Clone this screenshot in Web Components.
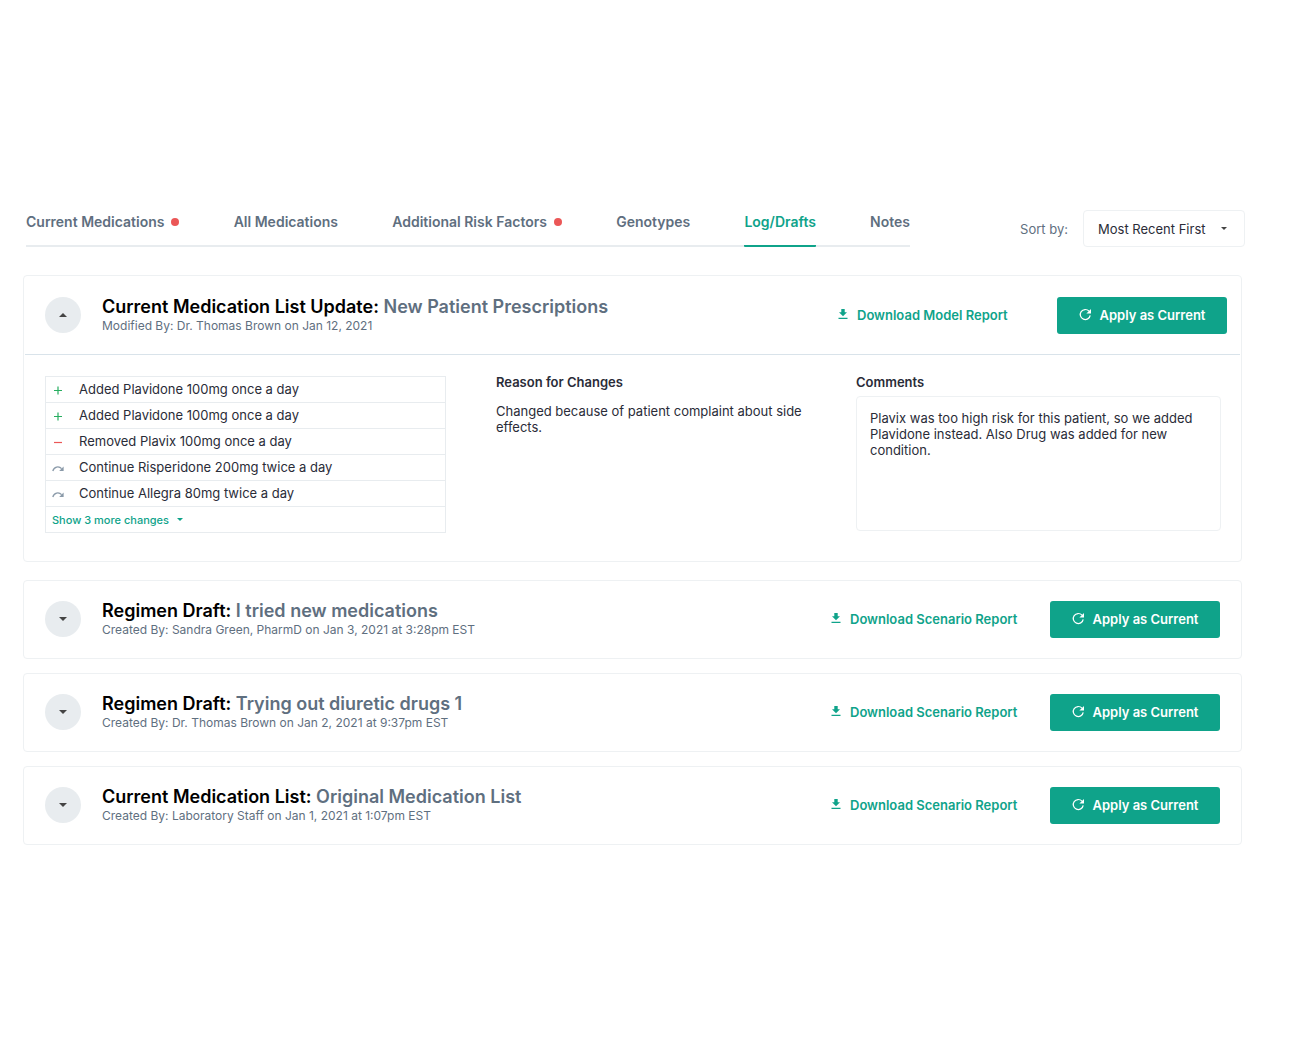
<!DOCTYPE html>
<html lang="en">
<head>
<meta charset="utf-8">
<title>Log/Drafts</title>
<style>
	:root {
		--teal: #0fa38a;
		--slate: #5f6f7f;
		--ink: #2a2c38;
		--line: #e8ecef;
		--hair: #eef1f3;
	}
	body {
		margin: 0;
		background: #fff;
		color: var(--ink);
		font: 13px/16px Inter, "Liberation Sans", sans-serif;
	}
</style>
</head>
<body>
<log-page>
	<nav-tabs slot="tabs">
		<nav-tab alert>Current Medications</nav-tab>
		<nav-tab>All Medications</nav-tab>
		<nav-tab alert>Additional Risk Factors</nav-tab>
		<nav-tab>Genotypes</nav-tab>
		<nav-tab active>Log/Drafts</nav-tab>
		<nav-tab>Notes</nav-tab>
	</nav-tabs>
	<sort-select slot="sort"></sort-select>

	<log-card open report="Download Model Report">
		<span slot="kind">Current Medication List Update:</span>
		<span slot="name">New Patient Prescriptions</span>
		<span slot="byline">Modified By: Dr. Thomas Brown on Jan 12, 2021</span>
		<change-list slot="changes">
			<change-item type="added">Added Plavidone 100mg once a day</change-item>
			<change-item type="added">Added Plavidone 100mg once a day</change-item>
			<change-item type="removed">Removed Plavix 100mg once a day</change-item>
			<change-item type="continued">Continue Risperidone 200mg twice a day</change-item>
			<change-item type="continued">Continue Allegra 80mg twice a day</change-item>
		</change-list>
		<span slot="reason">Changed because of patient complaint about side effects.</span>
		<comment-box slot="comments" text="Plavix was too high risk for this patient, so we added Plavidone instead. Also Drug was added for new condition."></comment-box>
	</log-card>
	<log-card report="Download Scenario Report">
		<span slot="kind">Regimen Draft:</span>
		<span slot="name">I tried new medications</span>
		<span slot="byline">Created By: Sandra Green, PharmD on Jan 3, 2021 at 3:28pm EST</span>
	</log-card>
	<log-card report="Download Scenario Report">
		<span slot="kind">Regimen Draft:</span>
		<span slot="name">Trying out diuretic drugs 1</span>
		<span slot="byline">Created By: Dr. Thomas Brown on Jan 2, 2021 at 9:37pm EST</span>
	</log-card>
	<log-card report="Download Scenario Report">
		<span slot="kind">Current Medication List:</span>
		<span slot="name">Original Medication List</span>
		<span slot="byline">Created By: Laboratory Staff on Jan 1, 2021 at 1:07pm EST</span>
	</log-card>
</log-page>

<script>
const CHANGE_ICONS = {
	added: `<path d="M6 1.500v8M2 5.500h8" stroke="#27ae60" stroke-width="1.2"/>`,
	removed: `<path d="M2 5.500h8" stroke="#eb5757" stroke-width="1.2"/>`,
	continued: `<path d="M.8 8C2 3.600 6.800 2.600 9.600 5.600" stroke="#8a9aa9" stroke-width="1.300"/><path d="M11.600 3.600v4.400H7.200z" fill="#8a9aa9"/>`
};

class LogPage
extends HTMLElement
{
	constructor ()
	{
		super();
		this.attachShadow({mode:"open"});
		this.shadowRoot.innerHTML = `
			<style>
				:host {
					display: block;
					padding: 210px 53px 40px 23px;
				}
				header {
					display: flex;
					justify-content: space-between;
					gap: 110px;
					margin-bottom: 28px;
					padding-left: 3px;
				}
				slot[name="tabs"]::slotted(*) {
					flex: 1;
				}
				main {
					display: flex;
					flex-direction: column;
					gap: 14px;
					padding-right: 3px;
				}
			</style>
			<header>
				<slot name="tabs"></slot>
				<slot name="sort"></slot>
			</header>
			<main><slot></slot></main>
		`;
	}
}

class NavTabs
extends HTMLElement
{
	constructor ()
	{
		super();
		this.attachShadow({mode:"open"});
		this.shadowRoot.innerHTML = `
			<style>
				:host {
					display: block;
				}
				nav {
					display: flex;
					justify-content: space-between;
					box-sizing: border-box;
					height: 37px;
					border-bottom: 2px solid var(--line);
				}
			</style>
			<nav><slot></slot></nav>
		`;
	}
}

class NavTab
extends HTMLElement
{
	constructor ()
	{
		super();
		this.attachShadow({mode:"open"});
		this.shadowRoot.innerHTML = `
			<style>
				:host {
					display: flex;
					margin-bottom: -2px;
				}
				button {
					display: flex;
					align-items: flex-start;
					gap: 7px;
					padding: 0;
					border: 0;
					border-bottom: 2px solid transparent;
					background: none;
					color: var(--slate);
					font: 600 14px/24px Inter, "Liberation Sans", sans-serif;
					white-space: nowrap;
					cursor: pointer;
				}
				:host([active]) button {
					border-color: var(--teal);
					border-radius: 1px;
					color: var(--teal);
				}
				i {
					display: none;
					width: 8px;
					height: 8px;
					margin-top: 8px;
					border-radius: 50%;
					background: #eb5757;
				}
				:host([alert]) i {
					display: block;
				}
			</style>
			<button type="button"><slot></slot><i></i></button>
		`;
	}
}

class SortSelect
extends HTMLElement
{
	constructor ()
	{
		super();
		this.attachShadow({mode:"open"});
		this.shadowRoot.innerHTML = `
			<style>
				:host {
					display: flex;
					align-items: center;
					gap: 15px;
				}
				label {
					color: var(--slate);
					white-space: nowrap;
				}
				.box {
					display: grid;
					align-items: center;
				}
				select, svg {
					grid-area: 1 / 1;
				}
				select {
					appearance: none;
					width: 162px;
					height: 37px;
					padding: 0 14px;
					border: 1px solid var(--hair);
					border-radius: 4px;
					background: #fff;
					color: inherit;
					font: inherit;
				}
				svg {
					justify-self: end;
					margin-right: 18px;
					pointer-events: none;
				}
			</style>
			<label for="sort">Sort by:</label>
			<div class="box">
				<select id="sort">
					<option>Most Recent First</option>
				</select>
				<svg width="6" height="3" aria-hidden="true"><path d="M0 0h6L3 3z" fill="#444"/></svg>
			</div>
		`;
	}
}

class LogCard
extends HTMLElement
{
	constructor ()
	{
		super();
		this.attachShadow({mode:"open"});
		this.shadowRoot.innerHTML = `
			<style>
				:host {
					display: block;
					border: 1px solid var(--hair);
					border-radius: 4px;
				}
				:host([open]) {
					margin-bottom: 4px;
				}
				header {
					display: flex;
					align-items: flex-start;
					padding: 20px 21px;
				}
				:host([open]) header {
					margin: 0 1px;
					padding: 21px 13px 20px 20px;
					border-bottom: 1px solid #d9e3ea;
				}
				.toggle {
					display: grid;
					place-items: center;
					flex: none;
					width: 36px;
					height: 36px;
					margin-right: 21px;
					padding: 0;
					border: 0;
					border-radius: 50%;
					background: #e8ecef;
					cursor: pointer;
				}
				:host([open]) .toggle svg {
					transform: rotate(180deg);
				}
				.heading {
					flex: 1;
				}
				h2 {
					margin: 0;
					color: #000;
					font-size: 18px;
					font-weight: 600;
					line-height: 20px;
				}
				h2 slot[name="name"] {
					color: var(--slate);
				}
				p {
					margin: 0;
				}
				.byline {
					color: var(--slate);
					font-size: 12px;
					line-height: 17px;
				}
				.report {
					display: flex;
					align-items: center;
					gap: 9px;
					width: 219px;
					height: 36px;
					color: var(--teal);
					font-weight: 600;
					text-decoration: none;
					white-space: nowrap;
				}
				.apply {
					display: flex;
					align-items: center;
					justify-content: center;
					gap: 8px;
					box-sizing: border-box;
					width: 170px;
					height: 37px;
					padding: 0 0 1px;
					border: 0;
					border-radius: 3px;
					background: var(--teal);
					color: #fff;
					font: inherit;
					font-weight: 600;
					cursor: pointer;
				}
				.body {
					display: none;
					grid-template-columns: 401fr 310fr 365fr;
					gap: 50px;
					align-items: start;
					padding: 21px 20px 28px 21px;
				}
				:host([open]) .body {
					display: grid;
				}
				h3 {
					margin: 0;
					font-size: 13px;
					font-weight: 600;
					line-height: 12px;
				}
				.reason p {
					margin-top: 15px;
				}
				.comments h3 {
					margin-bottom: 8px;
				}
			</style>
			<header>
				<button class="toggle" type="button" aria-label="Toggle details">
					<svg width="8" height="4"><path d="M0 0h8L4 4z" fill="#444"/></svg>
				</button>
				<div class="heading">
					<h2><slot name="kind"></slot> <slot name="name"></slot></h2>
					<p class="byline"><slot name="byline"></slot></p>
				</div>
				<a class="report" href="#">
					<svg width="10" height="14" aria-hidden="true">
						<path d="M3.300 1h3.400v3.300H9L5 8.300 1 4.300h2.300zM.5 9.700h9v1.200h-9z" fill="currentColor"/>
					</svg>
					<span></span>
				</a>
				<button class="apply" type="button">
					<svg width="13" height="14" fill="none" aria-hidden="true">
						<path d="M11.200 7.300A5 5 0 1 1 10 3.200" stroke="currentColor" stroke-width="1.200"/>
						<path d="M12 1v4.600H7.400z" fill="currentColor"/>
					</svg>
					Apply as Current
				</button>
			</header>
			<div class="body">
				<slot name="changes"></slot>
				<section class="reason">
					<h3>Reason for Changes</h3>
					<p><slot name="reason"></slot></p>
				</section>
				<section class="comments">
					<h3>Comments</h3>
					<slot name="comments"></slot>
				</section>
			</div>
		`;
		this.shadowRoot.querySelector(".toggle").addEventListener("click", this._onToggle.bind(this));
	}

	connectedCallback ()
	{
		this.shadowRoot.querySelector(".report span").textContent = this.getAttribute("report");
	}

	_onToggle ()
	{
		this.toggleAttribute("open");
	}
}

class ChangeList
extends HTMLElement
{
	constructor ()
	{
		super();
		this.attachShadow({mode:"open"});
		this.shadowRoot.innerHTML = `
			<style>
				:host {
					display: block;
					border: 1px solid var(--line);
				}
				button {
					display: flex;
					align-items: center;
					gap: 8px;
					height: 25px;
					padding: 0 6px;
					border: 0;
					background: none;
					color: var(--teal);
					font: 500 11px/16px Inter, "Liberation Sans", sans-serif;
					cursor: pointer;
				}
			</style>
			<div role="list"><slot></slot></div>
			<button type="button">
				Show 3 more changes
				<svg width="6" height="3" aria-hidden="true"><path d="M0 0h6L3 3z" fill="currentColor"/></svg>
			</button>
		`;
	}
}

class ChangeItem
extends HTMLElement
{
	constructor ()
	{
		super();
		this.attachShadow({mode:"open"});
		this.shadowRoot.innerHTML = `
			<style>
				:host {
					display: flex;
					align-items: center;
					gap: 15px;
					box-sizing: border-box;
					height: 26px;
					padding: 0 6px 2px;
					border-bottom: 1px solid var(--line);
				}
				svg {
					flex: none;
					margin-top: 4px;
				}
			</style>
			<svg width="12" height="12" fill="none" aria-hidden="true"></svg>
			<span><slot></slot></span>
		`;
	}

	connectedCallback ()
	{
		this.setAttribute("role", "listitem");
		this.shadowRoot.querySelector("svg").innerHTML = CHANGE_ICONS[this.getAttribute("type")];
	}
}

class CommentBox
extends HTMLElement
{
	constructor ()
	{
		super();
		this.attachShadow({mode:"open"});
		this.shadowRoot.innerHTML = `
			<style>
				:host {
					display: block;
				}
				textarea {
					display: block;
					box-sizing: border-box;
					width: 100%;
					height: 135px;
					padding: 13px;
					border: 1px solid var(--hair);
					border-radius: 4px;
					color: inherit;
					font: inherit;
					resize: none;
				}
			</style>
			<textarea aria-label="Comments"></textarea>
		`;
	}

	connectedCallback ()
	{
		this.shadowRoot.querySelector("textarea").textContent = this.getAttribute("text");
	}
}

customElements.define("log-page", LogPage);
customElements.define("nav-tabs", NavTabs);
customElements.define("nav-tab", NavTab);
customElements.define("sort-select", SortSelect);
customElements.define("log-card", LogCard);
customElements.define("change-list", ChangeList);
customElements.define("change-item", ChangeItem);
customElements.define("comment-box", CommentBox);
</script>
</body>
</html>
